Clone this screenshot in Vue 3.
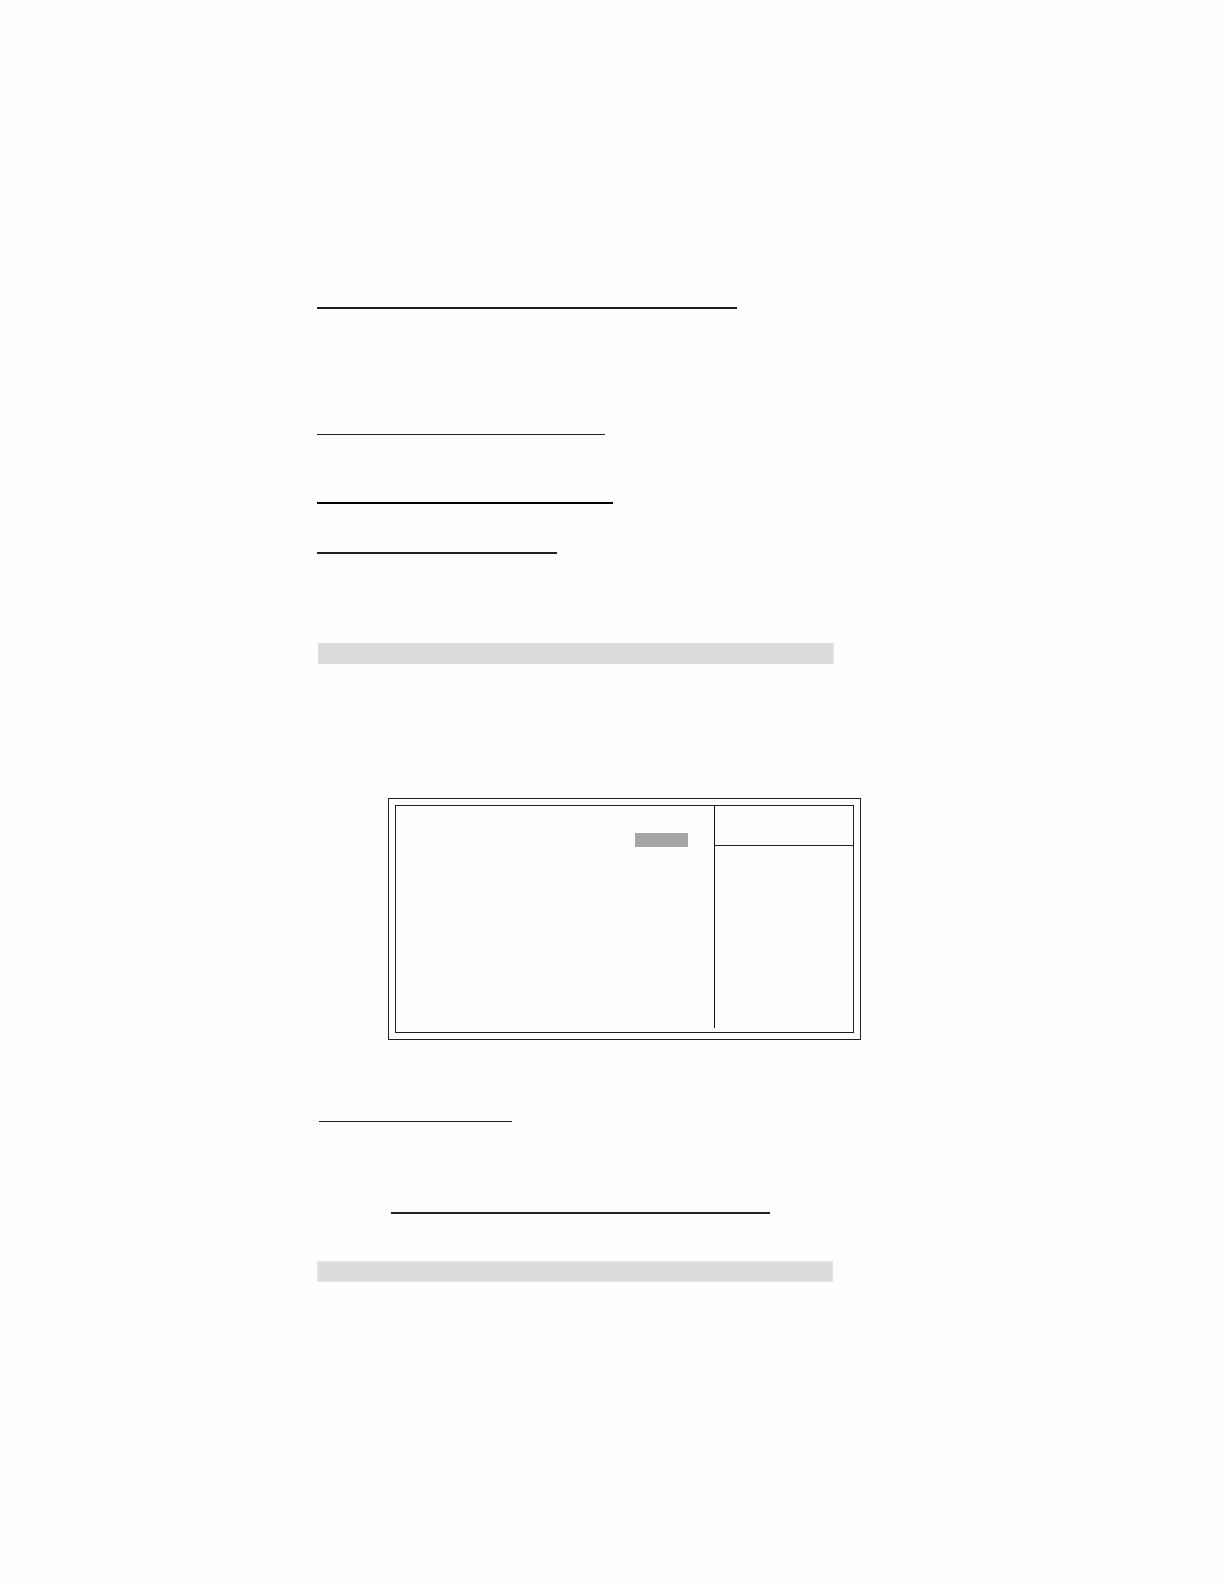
<template>
  <main class="page">
    <section class="rules">
      <hr
        v-for="rule in rules"
        :key="rule.name"
        class="rule"
        :class="rule.name"
      >
    </section>

    <div class="band"></div>

    <!-- 双线边框面板 -->
    <div class="frame">
      <div class="frame-inner">
        <div class="options">
          <div class="selected"></div>
        </div>
        <aside class="help">
          <div class="help-header"></div>
        </aside>
      </div>
    </div>

    <hr class="rule caption">
    <hr class="rule indented">

    <div class="band outlined"></div>
  </main>
</template>

<script setup>
const rules = [
  { name: 'title' },
  { name: 'subtitle' },
  { name: 'strong' },
  { name: 'short' }
]
</script>

<style>
body {
  background: #fefefe;
}
</style>

<style scoped>
.page {
  box-sizing: border-box;
  min-height: 100vh;
  padding: 307px 363px 0 317px;
}

.rules {
  display: flex;
  flex-direction: column;
  margin-bottom: 89px;
}

.rule {
  box-sizing: border-box;
  max-width: 100%;
  height: 2px;
  margin: 0;
  border: none;
  background: #231f20;
}

.title {
  width: 420px;
}

.subtitle {
  width: 288px;
  height: 1px;
  margin-top: 125px;
}

.strong {
  width: 296px;
  margin-top: 67px;
  background: #000;
}

.short {
  width: 240px;
  margin-top: 48px;
}

.band {
  box-sizing: border-box;
  height: 21px;
  margin-left: 1px;
  margin-right: 27px;
  border-right: 2px solid #e2e2e2;
  background: #dcdcdc;
}

.band.outlined {
  margin-left: 0;
  margin-right: 28px;
  border: solid #e2e2e2;
  border-width: 2px 1px 1px 2px;
}

.frame {
  margin: 134px 0 81px 71px;
  padding: 6px;
  border: 1px solid #231f20;
}

.frame-inner {
  display: grid;
  grid-template-columns: 1fr 139px;
  min-height: 226px;
  border: 1px solid #231f20;
}

.options {
  display: flex;
  justify-content: flex-end;
  align-items: flex-start;
  padding: 27px 26px 0 0;
}

.selected {
  width: 53px;
  height: 14px;
  background: #a5a5a5;
}

.help {
  margin-bottom: 4px;
  border-left: 1px solid #111;
}

.help-header {
  height: 39px;
  border-bottom: 1px solid #231f20;
}

.caption {
  width: 193px;
  height: 1px;
  margin-left: 2px;
}

.indented {
  width: 379px;
  margin: 90px 0 47px 74px;
}
</style>
